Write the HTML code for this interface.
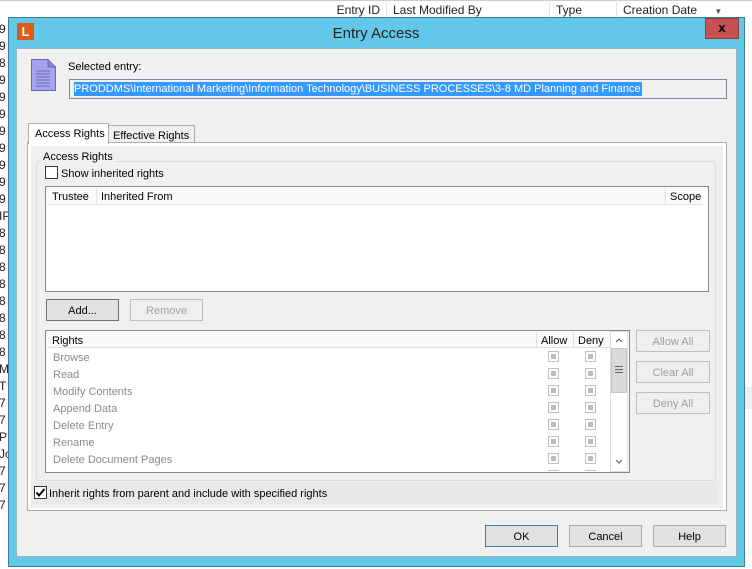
<!DOCTYPE html>
<html><head><style>
*{margin:0;padding:0;box-sizing:border-box}
body{width:752px;height:569px;background:#fff;position:relative;overflow:hidden;font-family:"Liberation Sans",sans-serif;font-size:11px;color:#000}
.a{position:absolute}
.hdr{position:absolute;top:0;height:17px;border-right:1px solid #e5e5e5;font-size:12px;padding:4px 0 0 6px;line-height:13px;color:#222}
.lc{position:absolute;left:-1px;font-size:12px;color:#222;line-height:17px}
.btn{position:absolute;height:22px;border:1px solid #adadad;background:#e1e1e1;text-align:center;line-height:22px;font-size:11px}
.dis{background:#efefef;border-color:#bfbfbf;color:#a0a0a0}
.cb{position:absolute;width:11px;height:11px;border:1px solid #c0c0c0;background:#fff}
.cb::after{content:"";position:absolute;left:2px;top:2px;width:5px;height:5px;background:#bdbdbd}
.gr{color:#8a8a8a;position:absolute;left:7px}
</style></head><body>
<div class="a" style="left:0;top:0;width:752px;height:1px;background:#ccc"></div>
<div class="hdr" style="left:305px;width:82px;text-align:right;padding-right:6px">Entry ID</div>
<div class="hdr" style="left:387px;width:163px">Last Modified By</div>
<div class="hdr" style="left:550px;width:67px">Type</div>
<div class="hdr" style="left:617px;width:135px;border:none">Creation Date <span style="font-size:8px;color:#555;margin-left:14px">▼</span></div>
<div class="lc" style="top:21px">9<br>9<br>8<br>9<br>9<br>9<br>9<br>9<br>9<br>9<br>9<br>IP<br>8<br>8<br>8<br>8<br>8<br>8<br>8<br>8<br>M<br>T<br>7<br>7<br>P<br>Jo<br>7<br>7<br>7</div>
<div class="a" style="left:744px;top:387px;width:8px;height:22px;background:#eee"></div>
<!-- dialog -->
<div class="a" style="left:8px;top:17px;width:737px;height:550px;background:#63c8e8;border:1px solid #3a7f96"></div>
<div class="a" style="left:17px;top:23px;width:17px;height:17px;background:#e05a12;color:#fff;font-weight:bold;font-size:13px;text-align:center;line-height:17px">L</div>
<div class="a" style="left:0;top:25px;width:752px;text-align:center;font-size:15px;color:#222">Entry Access</div>
<div class="a" style="left:705px;top:18px;width:34px;height:21px;background:#c75050;border:1px solid #8c3a3a;color:#000;font-weight:bold;font-size:13px;text-align:center;line-height:18px">x</div>
<div class="a" style="left:16px;top:48px;width:721px;height:509px;background:#f0f0f0;border:1px solid #9db3c0"></div>
<svg class="a" style="left:31px;top:59px" width="25" height="32"><path d="M0.5 0.5H17L24.5 8V31.5H0.5Z" fill="#a3a3f0" stroke="#6a6aa8"/><path d="M17 0.5V8H24.5" fill="#8888d0" stroke="#6a6aa8"/><g stroke="#7070b8"><line x1="5" y1="12" x2="19" y2="12"/><line x1="5" y1="15" x2="19" y2="15"/><line x1="5" y1="18" x2="19" y2="18"/><line x1="5" y1="21" x2="19" y2="21"/><line x1="5" y1="24" x2="19" y2="24"/><line x1="5" y1="27" x2="19" y2="27"/></g></svg>
<div class="a" style="left:68px;top:61px;font-size:11px">Selected entry:</div>
<div class="a" style="left:69px;top:79px;width:658px;height:20px;background:#f0f0f0;border:1px solid #7a8a9a"></div>
<div class="a" style="left:74px;top:82px;height:14px;background:#3399ff;color:#fff;font-size:11px;line-height:15px;padding-right:1px">PRODDMS\International Marketing\Information Technology\BUSINESS PROCESSES\3-8 MD Planning and Finance</div>
<div class="a" style="left:27px;top:142px;width:700px;height:369px;background:#fff;border:1px solid #adadad"></div>
<div class="a" style="left:31px;top:146px;width:692px;height:362px;background:#f0f0f0"></div>
<div class="a" style="left:108px;top:125px;width:87px;height:18px;background:#f0f0f0;border:1px solid #adadad;padding:4px 0 0 4px">Effective Rights</div>
<div class="a" style="left:28px;top:123px;width:81px;height:21px;background:#fff;border:1px solid #adadad;border-bottom:none;padding:4px 0 0 6px">Access Rights</div>
<div class="a" style="left:36px;top:161px;width:680px;height:320px;border:1px solid #dcdcdc;border-radius:3px"></div>
<div class="a" style="left:41px;top:151px;background:#f0f0f0;padding:0 2px">Access Rights</div>
<div class="a" style="left:45px;top:166px;width:13px;height:13px;border:1px solid #333;background:#fff"></div>
<div class="a" style="left:61px;top:168px">Show inherited rights</div>
<div class="a" style="left:45px;top:186px;width:664px;height:106px;background:#fff;border:1px solid #828790"></div>
<div class="a" style="left:47px;top:188px;width:656px;height:17px;background:#fafafa;border-bottom:1px solid #e0e0e0"></div>
<div class="a" style="left:52px;top:191px">Trustee</div>
<div class="a" style="left:96px;top:188px;width:1px;height:17px;background:#e0e0e0"></div>
<div class="a" style="left:101px;top:191px">Inherited From</div>
<div class="a" style="left:665px;top:188px;width:1px;height:17px;background:#e0e0e0"></div>
<div class="a" style="left:670px;top:191px">Scope</div>
<div class="btn" style="left:46px;top:299px;width:73px;background:#e1e1e1;border-color:#707070">Add...</div>
<div class="btn dis" style="left:130px;top:299px;width:73px">Remove</div>
<div class="a" style="left:45px;top:330px;width:585px;height:143px;background:#fff;border:1px solid #828790"></div>
<div class="a" style="left:47px;top:332px;width:563px;height:16px;background:#fafafa;border-bottom:1px solid #e0e0e0"></div>
<div class="a" style="left:52px;top:335px">Rights</div>
<div class="a" style="left:536px;top:332px;width:1px;height:16px;background:#e0e0e0"></div>
<div class="a" style="left:541px;top:335px">Allow</div>
<div class="a" style="left:573px;top:332px;width:1px;height:16px;background:#e0e0e0"></div>
<div class="a" style="left:578px;top:335px">Deny</div>
<div class="a" style="left:46px;top:350px;width:564px;height:121px;overflow:hidden">
<div class="gr" style="top:2px">Browse</div><div class="gr" style="top:19px">Read</div><div class="gr" style="top:36px">Modify Contents</div><div class="gr" style="top:53px">Append Data</div><div class="gr" style="top:70px">Delete Entry</div><div class="gr" style="top:87px">Rename</div><div class="gr" style="top:104px">Delete Document Pages</div>
<div class="cb" style="left:502px;top:1px"></div><div class="cb" style="left:539px;top:1px"></div>
<div class="cb" style="left:502px;top:18px"></div><div class="cb" style="left:539px;top:18px"></div>
<div class="cb" style="left:502px;top:35px"></div><div class="cb" style="left:539px;top:35px"></div>
<div class="cb" style="left:502px;top:52px"></div><div class="cb" style="left:539px;top:52px"></div>
<div class="cb" style="left:502px;top:69px"></div><div class="cb" style="left:539px;top:69px"></div>
<div class="cb" style="left:502px;top:86px"></div><div class="cb" style="left:539px;top:86px"></div>
<div class="cb" style="left:502px;top:103px"></div><div class="cb" style="left:539px;top:103px"></div>
<div class="cb" style="left:502px;top:120px"></div><div class="cb" style="left:539px;top:120px"></div>
</div>
<div class="a" style="left:610px;top:331px;width:18px;height:141px;background:#fff;border:1px solid #dcdcdc"></div>
<svg class="a" style="left:611px;top:334px" width="16" height="12"><path d="M5 8L8 5L11 8" fill="none" stroke="#555"/></svg>
<div class="a" style="left:611px;top:348px;width:16px;height:45px;background:#dadada;border:1px solid #c8c8c8"></div>
<svg class="a" style="left:611px;top:364px" width="16" height="10"><g stroke="#666"><line x1="4" y1="2.5" x2="12" y2="2.5"/><line x1="4" y1="5.5" x2="12" y2="5.5"/><line x1="4" y1="8.5" x2="12" y2="8.5"/></g></svg>
<svg class="a" style="left:611px;top:456px" width="16" height="12"><path d="M5 4L8 7L11 4" fill="none" stroke="#555"/></svg>
<div class="btn dis" style="left:636px;top:330px;width:74px">Allow All</div>
<div class="btn dis" style="left:636px;top:361px;width:74px">Clear All</div>
<div class="btn dis" style="left:636px;top:392px;width:74px">Deny All</div>
<div class="a" style="left:31px;top:482px;width:688px;height:22px;background:#e9e9e9"></div>
<div class="a" style="left:34px;top:486px;width:13px;height:13px;border:1px solid #333;background:#fff"></div>
<svg class="a" style="left:34px;top:486px" width="13" height="13"><path d="M2.5 6.5L5 9.5L10.5 3" fill="none" stroke="#000" stroke-width="2"/></svg>
<div class="a" style="left:49px;top:488px">Inherit rights from parent and include with specified rights</div>
<div class="btn" style="left:485px;top:525px;width:73px;border-color:#3c7fb1">OK</div>
<div class="btn" style="left:569px;top:525px;width:73px">Cancel</div>
<div class="btn" style="left:653px;top:525px;width:73px">Help</div>
</body></html>
